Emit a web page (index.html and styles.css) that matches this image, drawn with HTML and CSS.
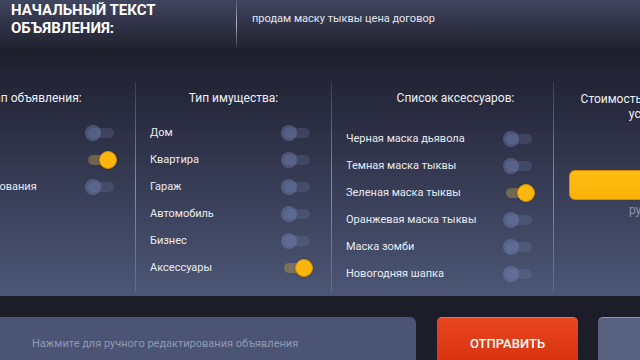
FILE: index.html
```html
<!DOCTYPE html>
<html lang="ru">
<head>
  <meta charset="UTF-8">
  <meta name="viewport" content="width=device-width, initial-scale=1.0">
  <title>Объявление</title>
  <link rel="stylesheet" href="styles.css">
</head>
<body>
  <header class="top">
    <div class="top-title">НАЧАЛЬНЫЙ ТЕКСТ<br>ОБЪЯВЛЕНИЯ:</div>
    <div class="top-sep"></div>
    <div class="top-text">продам маску тыквы цена договор</div>
  </header>

  <section class="panel">
    <div class="cols">
      <div class="col col-type">
        <p class="col-head">Тип объявления:</p>
        <ul class="opts">
          <li class="opt"><span>Продажа</span><i class="toggle"></i></li>
          <li class="opt"><span>Покупка</span><i class="toggle on"></i></li>
          <li class="opt"><span>Без редактирования</span><i class="toggle"></i></li>
        </ul>
      </div>
      <div class="col col-prop">
        <p class="col-head">Тип имущества:</p>
        <ul class="opts">
          <li class="opt"><span>Дом</span><i class="toggle"></i></li>
          <li class="opt"><span>Квартира</span><i class="toggle"></i></li>
          <li class="opt"><span>Гараж</span><i class="toggle"></i></li>
          <li class="opt"><span>Автомобиль</span><i class="toggle"></i></li>
          <li class="opt"><span>Бизнес</span><i class="toggle"></i></li>
          <li class="opt"><span>Аксессуары</span><i class="toggle on"></i></li>
        </ul>
      </div>
      <div class="col col-acc">
        <p class="col-head">Список аксессуаров:</p>
        <ul class="opts">
          <li class="opt"><span>Черная маска дьявола</span><i class="toggle"></i></li>
          <li class="opt"><span>Темная маска тыквы</span><i class="toggle"></i></li>
          <li class="opt"><span>Зеленая маска тыквы</span><i class="toggle on"></i></li>
          <li class="opt"><span>Оранжевая маска тыквы</span><i class="toggle"></i></li>
          <li class="opt"><span>Маска зомби</span><i class="toggle"></i></li>
          <li class="opt"><span>Новогодняя шапка</span><i class="toggle"></i></li>
        </ul>
      </div>
      <div class="col col-price">
        <p class="col-head">Стоимость размещения<br>услуги:</p>
        <div class="price-bar"></div>
        <p class="price-unit">рублей</p>
      </div>
    </div>
  </section>

  <footer class="bottom">
    <div class="edit">Нажмите для ручного редактирования объявления</div>
    <button class="send">ОТПРАВИТЬ</button>
    <div class="extra"></div>
  </footer>
</body>
</html>
```

FILE: styles.css
```css
* {
  margin: 0;
  padding: 0;
  box-sizing: border-box;
}
body {
  width: 640px;
  height: 360px;
  overflow: hidden;
  background: #1c1d28;
  font-family: Roboto, "Noto Sans", sans-serif;
  color: #fff;
}

/* top bar */
.top {
  display: flex;
  height: 50px;
  background: linear-gradient(to bottom, #40455f, #20212e);
}
.top-title {
  width: 236px;
  padding: 1px 0 0 11px;
  font-size: 15px;
  font-weight: 700;
  line-height: 18px;
}
.top-sep {
  width: 1px;
  height: 47px;
  background: linear-gradient(to bottom, rgba(200, 205, 230, .15), rgba(210, 215, 235, .8) 50%, rgba(200, 205, 230, .15));
}
.top-text {
  padding: 12px 0 0 15px;
  font-size: 11px;
  line-height: 14px;
  color: #e4e6ee;
}

/* options panel */
.panel {
  height: 246px;
  padding-top: 32px;
  background: linear-gradient(to bottom, #1e1f2b 0, #232436 12%, #4c5676 100%);
}
.cols {
  display: flex;
  height: 210px;
  margin-left: -85px;
}
.col {
  flex: none;
  border-left: 1px solid;
  border-image: linear-gradient(to bottom, rgba(110, 118, 150, .3), rgba(160, 166, 196, .75) 50%, rgba(120, 128, 160, .45)) 1;
}
.col-type { width: 220px; }
.col-prop { width: 196px; }
.col-acc { width: 222px; }
.col-price { width: 190px; }

.col-head {
  padding-top: 8px;
  font-size: 12px;
  line-height: 16px;
  text-align: center;
  color: #eef0f5;
}
.col-type .col-head { padding-left: 18px; }
.col-acc .col-head { padding-left: 26px; }
.col-price .col-head {
  padding-top: 10px;
  line-height: 15px;
}

.opts {
  list-style: none;
  margin-top: 13px;
}
.col-acc .opts { margin-top: 19px; }
.opt {
  display: flex;
  align-items: center;
  justify-content: space-between;
  height: 27px;
  padding: 0 18px 0 14px;
  font-size: 11px;
  color: #e8eaf0;
}

.toggle {
  position: relative;
  width: 32px;
  height: 16px;
  display: flex;
  align-items: center;
  justify-content: flex-start;
}
.toggle::before {
  content: "";
  position: absolute;
  left: 3px;
  right: 3px;
  top: 3px;
  height: 10px;
  border-radius: 5px;
  background: rgba(120, 135, 180, .22);
}
.toggle::after {
  content: "";
  position: relative;
  width: 16px;
  height: 16px;
  border-radius: 50%;
  background: rgba(120, 135, 185, .42);
}
.toggle.on { justify-content: flex-end; }
.toggle.on::before { background: rgba(185, 155, 70, .45); }
.toggle.on::after {
  background: #fbb60d;
  border: 1px solid #d8920a;
  box-shadow: 0 0 2px rgba(0, 0, 0, .35);
}

/* price column */
.price-bar {
  height: 30px;
  margin: 48px 0 0 15px;
  width: 180px;
  border-radius: 6px;
  background: linear-gradient(to bottom, #fdbd12, #f9b208);
  border: 1px solid #d98a05;
}
.price-unit {
  margin-top: 3px;
  font-size: 12px;
  line-height: 14px;
  text-align: center;
  color: #8a92ae;
}

/* bottom row */
.bottom {
  display: flex;
  height: 52px;
  margin-top: 21px;
}
.edit {
  flex: none;
  width: 426px;
  margin-left: -10px;
  padding-left: 42px;
  display: flex;
  align-items: center;
  border-radius: 6px;
  background: #4b5474;
  font-size: 11px;
  color: #8f98b5;
}
.send {
  flex: none;
  width: 141px;
  margin-left: 21px;
  border: none;
  border-top: 1px solid #f3704a;
  border-radius: 5px;
  background: linear-gradient(to bottom, #e84620, #d72f0c);
  color: #fff;
  font-family: Roboto, "Noto Sans", sans-serif;
  font-size: 13px;
  font-weight: 500;
}
.extra {
  flex: none;
  width: 80px;
  margin-left: 20px;
  border-top: 1px solid #9096b2;
  border-radius: 5px;
  background: #596180;
}
```
